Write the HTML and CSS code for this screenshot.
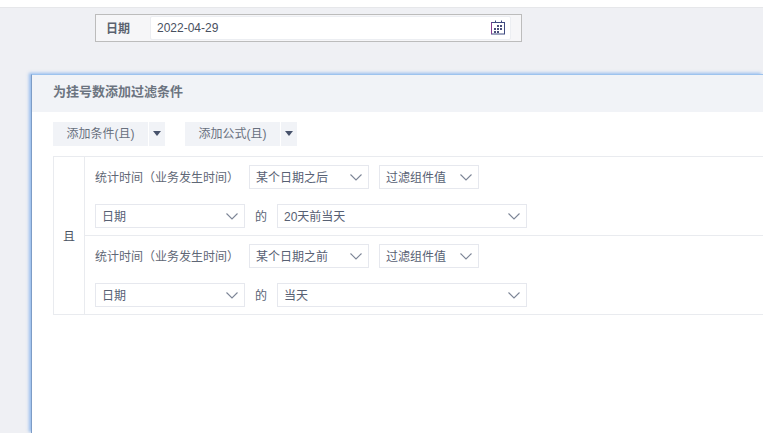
FILE: index.html
```html
<!DOCTYPE html>
<html lang="zh">
<head>
<meta charset="utf-8">
<title>过滤条件</title>
<link rel="stylesheet" href="styles.css">
</head>
<body>
<div class="topstrip"></div>
<div class="filterbar">
  <span class="filter-label">日期</span>
  <div class="date-input">
    <span class="date-text">2022-04-29</span>
    <svg class="cal" width="15" height="15" viewBox="0 0 15 15">
      <rect x="0.5" y="2.5" width="13" height="11.5" fill="#fff" stroke="#3f4a80"/>
      <path d="M0.5 2.5V14" stroke="#8a3f93" fill="none"/>
      <path d="M4.5 0.5V3M10.5 0.5V3" stroke="#3f4a80" fill="none"/>
      <path d="M6 5h2v2H6zM9 5h2v2H9zM3 8h2v2H3zM6 8h2v2H6zM9 8h2v2H9zM3 11h2v2H3zM6 11h2v2H6z" fill="#4a4f7a"/>
    </svg>
  </div>
</div>
<section class="dialog">
  <h2 class="dialog-title">为挂号数添加过滤条件</h2>
  <div class="toolbar">
    <div class="split"><span class="split-main">添加条件(且)</span><span class="split-arrow"></span></div>
    <div class="split"><span class="split-main">添加公式(且)</span><span class="split-arrow"></span></div>
  </div>
  <div class="cond-table">
    <div class="logic">且</div>
    <div class="rows">
      <div class="cond">
        <div class="line">
          <span class="field">统计时间（业务发生时间）</span>
          <div class="sel w120">某个日期之后<svg class="chev" viewBox="0 0 12 7"><path d="M0.5 0.5l5.5 5.5 5.5-5.5"/></svg></div>
          <div class="sel w100">过滤组件值<svg class="chev" viewBox="0 0 12 7"><path d="M0.5 0.5l5.5 5.5 5.5-5.5"/></svg></div>
        </div>
        <div class="line">
          <div class="sel w150">日期<svg class="chev" viewBox="0 0 12 7"><path d="M0.5 0.5l5.5 5.5 5.5-5.5"/></svg></div>
          <span class="of">的</span>
          <div class="sel w250">20天前当天<svg class="chev" viewBox="0 0 12 7"><path d="M0.5 0.5l5.5 5.5 5.5-5.5"/></svg></div>
        </div>
      </div>
      <div class="cond">
        <div class="line">
          <span class="field">统计时间（业务发生时间）</span>
          <div class="sel w120">某个日期之前<svg class="chev" viewBox="0 0 12 7"><path d="M0.5 0.5l5.5 5.5 5.5-5.5"/></svg></div>
          <div class="sel w100">过滤组件值<svg class="chev" viewBox="0 0 12 7"><path d="M0.5 0.5l5.5 5.5 5.5-5.5"/></svg></div>
        </div>
        <div class="line">
          <div class="sel w150">日期<svg class="chev" viewBox="0 0 12 7"><path d="M0.5 0.5l5.5 5.5 5.5-5.5"/></svg></div>
          <span class="of">的</span>
          <div class="sel w250">当天<svg class="chev" viewBox="0 0 12 7"><path d="M0.5 0.5l5.5 5.5 5.5-5.5"/></svg></div>
        </div>
      </div>
    </div>
  </div>
</section>
</body>
</html>
```
FILE: styles.css
```css
* { box-sizing: border-box; }
html, body { margin: 0; height: 433px; overflow: hidden; }
body {
  width: 763px;
  background: #eff0f4;
  font-family: "Liberation Sans", "Noto Sans CJK SC", sans-serif;
  font-size: 12px;
  color: #5a6376;
}
.topstrip { height: 8px; background: #fff; border-bottom: 1px solid #e6e7ea; }
.filterbar {
  margin: 6px 0 0 95px;
  width: 427px;
  height: 28px;
  display: flex;
  align-items: center;
  padding-left: 10px;
  background: #f6f6f8;
  border: 1px solid #bcbcbc;
}
.filter-label { width: 44px; font-weight: 700; color: #5b6270; padding-bottom: 2px; }
.date-input {
  width: 361px;
  height: 24px;
  background: #fff;
  border: 1px solid #eceef2;
  border-radius: 2px;
  display: flex;
  align-items: center;
  justify-content: space-between;
  padding: 0 4px 0 6px;
  color: #48505f;
}
.date-text { padding-bottom: 1px; }
.cal { display: block; margin-top: -2px; }
.dialog {
  margin: 32px 0 0 31px;
  height: 359px;
  background: #fff;
  border-top: 1px solid #9dc3ee;
  border-left: 1px solid #7d9cc6;
  box-shadow: -2px -1px 3px rgba(110, 165, 235, 0.7);
}
.dialog-title {
  margin: 0;
  height: 37px;
  line-height: 33px;
  padding-left: 21px;
  background: #f1f3f7;
  font-size: 13px;
  font-weight: 700;
  color: #6c7480;
}
.toolbar { display: flex; gap: 20px; padding: 10px 0 0 21px; }
.split { display: flex; gap: 1px; height: 24px; line-height: 24px; }
.split-main { width: 95px; background: #f1f3f7; text-align: center; color: #68707e; }
.split-arrow { width: 16px; background: #f1f3f7; position: relative; }
.split-arrow::after {
  content: "";
  position: absolute;
  left: 4px;
  top: 9px;
  border: 4px solid transparent;
  border-bottom: 0;
  border-top: 5px solid #47526b;
}
.cond-table {
  margin: 10px 0 0 21px;
  height: 159px;
  display: flex;
  border: 1px solid #e9ebef;
  border-right: 0;
}
.logic {
  width: 31px;
  flex: none;
  display: flex;
  align-items: center;
  justify-content: center;
  border-right: 1px solid #e9ebef;
  color: #4a5262;
}
.rows { flex: 1; }
.cond { height: 78px; padding: 8px 0 0 10px; }
.cond + .cond { border-top: 1px solid #e9ebef; }
.line { display: flex; align-items: center; height: 24px; }
.line + .line { margin-top: 15px; }
.field { width: 154px; color: #5f6776; white-space: nowrap; padding-bottom: 1px; }
.sel {
  height: 24px;
  display: flex;
  align-items: center;
  justify-content: space-between;
  padding: 0 6px 1px 6px;
  border: 1px solid #e6e8ee;
  background: #fff;
  color: #576073;
}
.w120 { width: 120px; }
.w100 { width: 100px; margin-left: 10px; }
.w150 { width: 150px; }
.w250 { width: 250px; }
.of { width: 32px; text-align: center; color: #5a6376; padding-bottom: 1px; }
.chev { width: 12px; height: 7px; fill: none; stroke: #7c8596; stroke-width: 1.1; display: block; margin-top: 1px; }
```
